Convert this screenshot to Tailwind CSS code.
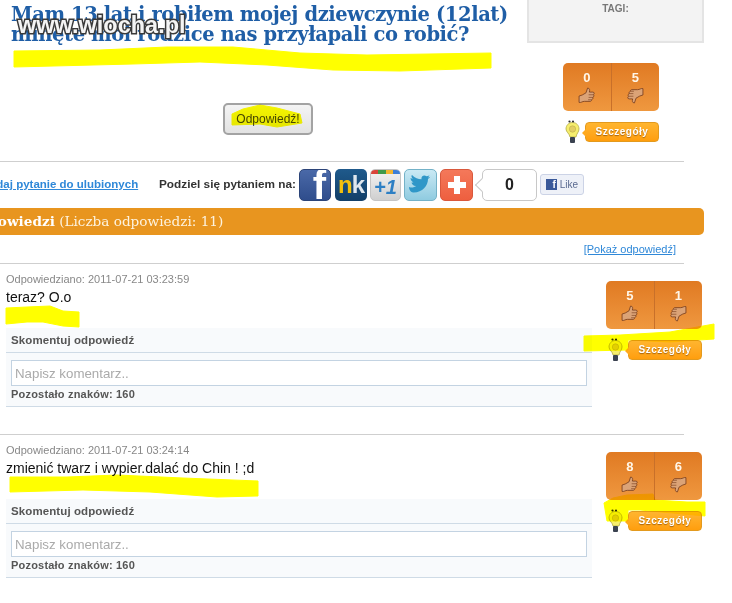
<!DOCTYPE html>
<html lang="pl">
<head>
<meta charset="utf-8">
<title>Pytanie</title>
<script src="https://cdn.jsdelivr.net/npm/@tailwindcss/browser@4"></script>
</head>
<body class="bg-white">
<div class="relative w-[732px] h-[603px] overflow-hidden bg-white font-['Liberation_Sans',Arial,sans-serif] text-[#333]">

  <!-- header -->
  <div class="flex h-[161px]">
    <div class="w-[527px]">
      <h1 class="pl-[11px] pt-[5px] font-['DejaVu_Serif',serif] font-bold text-[19.500px] leading-[20px] tracking-[-0.4px] text-[#1f5ea6] whitespace-nowrap">Mam 13 lat i robiłem mojej dziewczynie (12lat)<br>minęte moi rodzice nas przyłapali co robić?</h1>
      <button class="block ml-[223px] mt-[58px] w-[90px] h-[32px] rounded-[5px] border-2 border-[#a3a3a3] bg-gradient-to-b from-[#f4f4f4] to-[#e2e2e2] text-[12px] text-[#444]">Odpowiedź!</button>
    </div>
    <div class="w-[177px]">
      <div class="h-[43px] border-2 border-t-0 border-[#e4e4e4] bg-[#f3f3f3] pt-[1px] text-center text-[10px] font-bold leading-[16px] text-[#777]">TAGI:</div>
      <div class="ml-[36px] mt-[20px] w-[96px]">
        <div class="flex h-[48px] rounded-[5px] bg-gradient-to-b from-[#e07a22] to-[#ef983f] text-[#fff6e8] font-bold text-[13px] text-center">
          <div class="flex-1 border-r border-[#c8702a] pt-[7px] flex flex-col items-center gap-[2px] leading-[15px]">0
            <svg width="17" height="17" viewBox="0 0 16 16"><path d="M1 8.500 4 7.500 7.500 5.500 9 1c2.200 0 2.200 2 1.700 3.800H14c1.600 0 1.600 2 .4 2.500 1 .6.600 2-.5 2.300.5 1 0 2-1 2.200 0 1-.6 1.700-1.500 1.700H6C4 13.500 3 15 1 14.500z" fill="#dba377" stroke="#7a4020" stroke-width=".8"/><path d="M10 7.300h4.300M10 9.800h3.900M9.500 12h3" stroke="#7a4020" stroke-width=".6" fill="none"/></svg>
          </div>
          <div class="flex-1 pt-[7px] flex flex-col items-center gap-[2px] leading-[15px]">5
            <svg width="17" height="17" viewBox="0 0 16 16"><path d="M15 7.500 12 8.500 8.500 10.500 7 15c-2.200 0-2.200-2-1.700-3.800H2C.4 11.200.4 9.200 1.600 8.700.6 8.100 1 6.700 2.100 6.400 1.600 5.400 2.100 4.400 3.100 4.200 3.100 3.200 3.700 2.500 4.600 2.500H10C12 2.500 13 1 15 1.500z" fill="#dba377" stroke="#7a4020" stroke-width=".8"/><path d="M6 8.700H1.700M6 6.200H2.100M6.500 4h-3" stroke="#7a4020" stroke-width=".6" fill="none"/></svg>
          </div>
        </div>
        <div class="flex items-center mt-[9px] pl-[2px]">
          <svg class="shrink-0 w-[15px] h-[24px]" viewBox="0 0 15 24"><path d="M7.500 2.500C11.500 2.500 14 5.500 14 9c0 3-2.500 4.500-3 8H5C4.500 13.500 1 12 1 9c0-3.500 2.500-6.500 6.500-6.500z" fill="#f6ee6e" stroke="#b3ab45" stroke-width=".8"/><circle cx="7.500" cy="9" r="3.200" fill="#e3cf63" stroke="#bfb04a" stroke-width=".6"/><rect x="5" y="17" width="5" height="6" rx="1" fill="#3a4250"/><circle cx="4.500" cy="1.500" r="1.100" fill="#333"/><circle cx="8" cy="1.500" r="1.100" fill="#333"/></svg>
          <div class="relative ml-[5px] w-[74px] h-[20px] rounded-[4px] border border-[#e39a1e] bg-gradient-to-b from-[#ffb52e] to-[#ff9e0c] text-center text-white font-bold text-[10px] tracking-[0.5px] leading-[18px] [text-shadow:0_1px_1px_#a5650f]">Szczegóły<span class="absolute -left-[4px] top-[6px] w-0 h-0 border-y-[4px] border-y-transparent border-r-[4px] border-r-[#ffa91e]"></span></div>
        </div>
      </div>
    </div>
  </div>

  <div class="w-[684px] h-px bg-[#cfcfcf]"></div>

  <!-- share row -->
  <div class="flex items-center h-[46px] pb-[1px] whitespace-nowrap font-bold">
    <a class="-ml-[19px] w-[178px] text-[11.500px] text-[#2f88d8] underline">Dodaj pytanie do ulubionych</a>
    <span class="w-[140px] text-[11.800px]">Podziel się pytaniem na:</span>
    <div class="flex items-center">
      <div class="w-[32px] h-[32px] rounded-[5px] overflow-hidden bg-gradient-to-b from-[#4a69a8] to-[#2f4d8c] border border-[#2c4478] flex items-end justify-end pr-[4px] text-white font-bold text-[40px] leading-[30px]">f</div>
      <div class="ml-[4px] w-[32px] h-[32px] rounded-[5px] bg-gradient-to-b from-[#1f5a8c] to-[#123f68] flex items-center justify-center text-[24px] leading-none tracking-[-1px]"><span class="text-[#f2c00e]">n</span><span class="text-[#dfe7ee]">k</span></div>
      <div class="ml-[3px] w-[31px] h-[32px] rounded-[5px] overflow-hidden bg-gradient-to-b from-[#f4f4f4] to-[#cfcfcf] border border-[#c4c4c4] text-center text-[#2d7fc4] text-[20px] italic leading-[26px]"><div class="flex h-[4px]"><span class="flex-1 bg-[#d9453a]"></span><span class="flex-1 bg-[#3f9a4a]"></span><span class="flex-1 bg-[#f2b632]"></span><span class="flex-1 bg-[#3d7fd8]"></span></div>+1</div>
      <div class="ml-[3px] w-[33px] h-[32px] rounded-[5px] bg-gradient-to-b from-[#c9e9f4] to-[#8fcbe0] border border-[#74b2c8] flex items-center justify-center">
        <svg width="26" height="20" viewBox="0 0 26 20"><path d="M1 12c3 1 5 .5 7-1-3 0-4-2-4.500-3.500h2C3.500 6.500 2.500 4.500 2.500 3c1 .5 1.500.8 2.500.8C3.500 2.500 3 1 4 0c3 3 6 4 9.500 4.200C13 1 16 -.5 18.500 1.200c1-.1 2-.5 3-1-.3 1-1 1.800-1.800 2.300.9-.1 1.700-.3 2.500-.7-.6.9-1.300 1.600-2.200 2.200 0 7-6 14-15 13.500C3 17.300 1 15 1 12z" fill="#2f97c8"/></svg>
      </div>
      <div class="ml-[3px] w-[33px] h-[32px] rounded-[5px] bg-gradient-to-b from-[#f4785a] to-[#ee5f3f] border border-[#d9583c] flex items-center justify-center">
        <svg width="20" height="20" viewBox="0 0 20 20"><path d="M7 1h6v6h6v6h-6v6H7v-6H1V7h6z" fill="#fff"/></svg>
      </div>
      <div class="relative ml-[9px] w-[55px] h-[32px] rounded-[5px] border border-[#c8c8c8] bg-white text-center text-[#222] text-[16px] leading-[30px]">0<span class="absolute -left-[6px] top-[10px] w-[10px] h-[10px] rotate-45 border-l border-b border-[#c8c8c8] bg-white"></span></div>
      <div class="ml-[3px] w-[44px] h-[21px] rounded-[3px] border border-[#ccd3e6] bg-[#eef1f8] flex items-center justify-center gap-[3px] font-normal text-[10px] text-[#5a6a90]"><span class="w-[11px] h-[11px] bg-[#3b5a9a] text-white font-bold text-[10px] leading-[12px] text-right pr-[1px]">f</span>Like</div>
    </div>
  </div>

  <!-- orange bar -->
  <div class="w-[704px] h-[27px] rounded-r-[5px] bg-[#e8951f] overflow-hidden whitespace-nowrap font-['DejaVu_Serif',serif] text-[13.600px] leading-[26px] text-[#fdf3df]"><span class="block -ml-[33px]"><b class="text-white">Odpowiedzi</b> (Liczba odpowiedzi: 11)</span></div>

  <div class="w-[684px] h-[28px] pr-[8px] text-right text-[11px] leading-[28px] text-[#2f88d8]"><a class="underline">[Pokaż odpowiedź]</a></div>
  <div class="w-[684px] h-px bg-[#cfcfcf]"></div>

  <!-- answer 1 -->
  <div class="flex w-[702px] h-[170px]">
    <div class="w-[592px] pl-[6px] pt-[8px]">
      <div class="h-[14px] text-[11px] leading-[14px] text-[#888]">Odpowiedziano: 2011-07-21 03:23:59</div>
      <div class="h-[20px] mt-[1px] text-[14px] leading-[20px] text-[#111]">teraz? O.o</div>
      <div class="mt-[21px] h-[79px] border-b border-[#cfdbe6] bg-[#f8fafc] font-bold">
        <div class="h-[25px] border-b border-[#cfdbe6] pl-[5px] text-[11.500px] tracking-[0.1px] leading-[24px] text-[#555]">Skomentuj odpowiedź</div>
        <input class="block mt-[7px] ml-[5px] w-[576px] h-[26px] border border-[#c3d3e2] bg-white px-[3px] text-[13.300px] font-normal placeholder:text-[#aaa]" placeholder="Napisz komentarz..">
        <div class="pl-[5px] text-[11px] tracking-[0.2px] leading-[16px] text-[#555]">Pozostało znaków: 160</div>
      </div>
    </div>
    <div class="ml-[14px] pt-[17px] w-[96px]">
      <div class="flex h-[48px] rounded-[5px] bg-gradient-to-b from-[#e07a22] to-[#ef983f] text-[#fff6e8] font-bold text-[13px] text-center">
        <div class="flex-1 border-r border-[#c8702a] pt-[7px] flex flex-col items-center gap-[2px] leading-[15px]">5
          <svg width="17" height="17" viewBox="0 0 16 16"><path d="M1 8.500 4 7.500 7.500 5.500 9 1c2.200 0 2.200 2 1.700 3.800H14c1.600 0 1.600 2 .4 2.500 1 .6.600 2-.5 2.300.5 1 0 2-1 2.200 0 1-.6 1.700-1.500 1.700H6C4 13.500 3 15 1 14.500z" fill="#dba377" stroke="#7a4020" stroke-width=".8"/><path d="M10 7.300h4.300M10 9.800h3.900M9.500 12h3" stroke="#7a4020" stroke-width=".6" fill="none"/></svg>
        </div>
        <div class="flex-1 pt-[7px] flex flex-col items-center gap-[2px] leading-[15px]">1
          <svg width="17" height="17" viewBox="0 0 16 16"><path d="M15 7.500 12 8.500 8.500 10.500 7 15c-2.200 0-2.200-2-1.700-3.800H2C.4 11.200.4 9.200 1.600 8.700.6 8.100 1 6.700 2.100 6.400 1.600 5.400 2.100 4.400 3.100 4.200 3.100 3.200 3.700 2.500 4.600 2.500H10C12 2.500 13 1 15 1.500z" fill="#dba377" stroke="#7a4020" stroke-width=".8"/><path d="M6 8.700H1.700M6 6.200H2.100M6.500 4h-3" stroke="#7a4020" stroke-width=".6" fill="none"/></svg>
        </div>
      </div>
      <div class="flex items-center mt-[9px] pl-[2px]">
        <svg class="shrink-0 w-[15px] h-[24px]" viewBox="0 0 15 24"><path d="M7.500 2.500C11.500 2.500 14 5.500 14 9c0 3-2.500 4.500-3 8H5C4.500 13.500 1 12 1 9c0-3.500 2.500-6.500 6.500-6.500z" fill="#f6ee6e" stroke="#b3ab45" stroke-width=".8"/><circle cx="7.500" cy="9" r="3.200" fill="#e3cf63" stroke="#bfb04a" stroke-width=".6"/><rect x="5" y="17" width="5" height="6" rx="1" fill="#3a4250"/><circle cx="4.500" cy="1.500" r="1.100" fill="#333"/><circle cx="8" cy="1.500" r="1.100" fill="#333"/></svg>
        <div class="relative ml-[5px] w-[74px] h-[20px] rounded-[4px] border border-[#e39a1e] bg-gradient-to-b from-[#ffb52e] to-[#ff9e0c] text-center text-white font-bold text-[10px] tracking-[0.5px] leading-[18px] [text-shadow:0_1px_1px_#a5650f]">Szczegóły<span class="absolute -left-[4px] top-[6px] w-0 h-0 border-y-[4px] border-y-transparent border-r-[4px] border-r-[#ffa91e]"></span></div>
      </div>
    </div>
  </div>
  <div class="w-[684px] h-px bg-[#cfcfcf]"></div>

  <!-- answer 2 -->
  <div class="flex w-[702px] h-[170px]">
    <div class="w-[592px] pl-[6px] pt-[8px]">
      <div class="h-[14px] text-[11px] leading-[14px] text-[#888]">Odpowiedziano: 2011-07-21 03:24:14</div>
      <div class="h-[20px] mt-[1px] text-[14px] leading-[20px] text-[#111]">zmienić twarz i wypier.dalać do Chin ! ;d</div>
      <div class="mt-[21px] h-[79px] border-b border-[#cfdbe6] bg-[#f8fafc] font-bold">
        <div class="h-[25px] border-b border-[#cfdbe6] pl-[5px] text-[11.500px] tracking-[0.1px] leading-[24px] text-[#555]">Skomentuj odpowiedź</div>
        <input class="block mt-[7px] ml-[5px] w-[576px] h-[26px] border border-[#c3d3e2] bg-white px-[3px] text-[13.300px] font-normal placeholder:text-[#aaa]" placeholder="Napisz komentarz..">
        <div class="pl-[5px] text-[11px] tracking-[0.2px] leading-[16px] text-[#555]">Pozostało znaków: 160</div>
      </div>
    </div>
    <div class="ml-[14px] pt-[17px] w-[96px]">
      <div class="flex h-[48px] rounded-[5px] bg-gradient-to-b from-[#e07a22] to-[#ef983f] text-[#fff6e8] font-bold text-[13px] text-center">
        <div class="flex-1 border-r border-[#c8702a] pt-[7px] flex flex-col items-center gap-[2px] leading-[15px]">8
          <svg width="17" height="17" viewBox="0 0 16 16"><path d="M1 8.500 4 7.500 7.500 5.500 9 1c2.200 0 2.200 2 1.700 3.800H14c1.600 0 1.600 2 .4 2.500 1 .6.600 2-.5 2.300.5 1 0 2-1 2.200 0 1-.6 1.700-1.500 1.700H6C4 13.500 3 15 1 14.500z" fill="#dba377" stroke="#7a4020" stroke-width=".8"/><path d="M10 7.300h4.300M10 9.800h3.900M9.500 12h3" stroke="#7a4020" stroke-width=".6" fill="none"/></svg>
        </div>
        <div class="flex-1 pt-[7px] flex flex-col items-center gap-[2px] leading-[15px]">6
          <svg width="17" height="17" viewBox="0 0 16 16"><path d="M15 7.500 12 8.500 8.500 10.500 7 15c-2.200 0-2.200-2-1.700-3.800H2C.4 11.200.4 9.200 1.600 8.700.6 8.100 1 6.700 2.100 6.400 1.600 5.400 2.100 4.400 3.100 4.200 3.100 3.200 3.700 2.500 4.600 2.500H10C12 2.500 13 1 15 1.500z" fill="#dba377" stroke="#7a4020" stroke-width=".8"/><path d="M6 8.700H1.700M6 6.200H2.100M6.500 4h-3" stroke="#7a4020" stroke-width=".6" fill="none"/></svg>
        </div>
      </div>
      <div class="flex items-center mt-[9px] pl-[2px]">
        <svg class="shrink-0 w-[15px] h-[24px]" viewBox="0 0 15 24"><path d="M7.500 2.500C11.500 2.500 14 5.500 14 9c0 3-2.500 4.500-3 8H5C4.500 13.500 1 12 1 9c0-3.500 2.500-6.500 6.500-6.500z" fill="#f6ee6e" stroke="#b3ab45" stroke-width=".8"/><circle cx="7.500" cy="9" r="3.200" fill="#e3cf63" stroke="#bfb04a" stroke-width=".6"/><rect x="5" y="17" width="5" height="6" rx="1" fill="#3a4250"/><circle cx="4.500" cy="1.500" r="1.100" fill="#333"/><circle cx="8" cy="1.500" r="1.100" fill="#333"/></svg>
        <div class="relative ml-[5px] w-[74px] h-[20px] rounded-[4px] border border-[#e39a1e] bg-gradient-to-b from-[#ffb52e] to-[#ff9e0c] text-center text-white font-bold text-[10px] tracking-[0.5px] leading-[18px] [text-shadow:0_1px_1px_#a5650f]">Szczegóły<span class="absolute -left-[4px] top-[6px] w-0 h-0 border-y-[4px] border-y-transparent border-r-[4px] border-r-[#ffa91e]"></span></div>
      </div>
    </div>
  </div>

  <!-- yellow marker scribbles lying over the page -->
  <svg class="absolute inset-0 mix-blend-multiply pointer-events-none" width="732" height="603" viewBox="0 0 732 603">
    <g fill="#ffff00" stroke="#ffff00" stroke-width="1" stroke-linejoin="round">
      <path d="M14 51 100 50 167 47 233 47 300 53 367 55 491 53 491 68 400 71 333 70 267 65 200 62 133 64 14 67z"/>
      <path d="M232 114 243 109 260 105 277 108 300 114 302 123 277 127 260 124 232 125z"/>
      <path d="M6 308 27 307 50 306 63 311 79 312 79 327 63 326 43 322 27 322 6 324z"/>
      <path d="M584 336 620 335 670 332 714 324 714 339 670 342 628 340 628 350 584 351z"/>
      <path d="M10 477 67 477 117 475 183 478 258 481 258 496 217 497 150 492 83 490 10 492z"/>
      <path d="M604 503 613 498 627 495 653 494 655 500 687 502 705 502 705 516 640 510 628 510 628 521 607 521z"/>
    </g>
  </svg>

  <!-- watermark -->
  <div class="absolute left-[18px] top-[10px] font-bold text-[23.500px] leading-[30px] text-[#f4f4f4] [-webkit-text-stroke:3px_#3a3a3a] [paint-order:stroke_fill]">www.wiocha.pl</div>
</div>
</body>
</html>
